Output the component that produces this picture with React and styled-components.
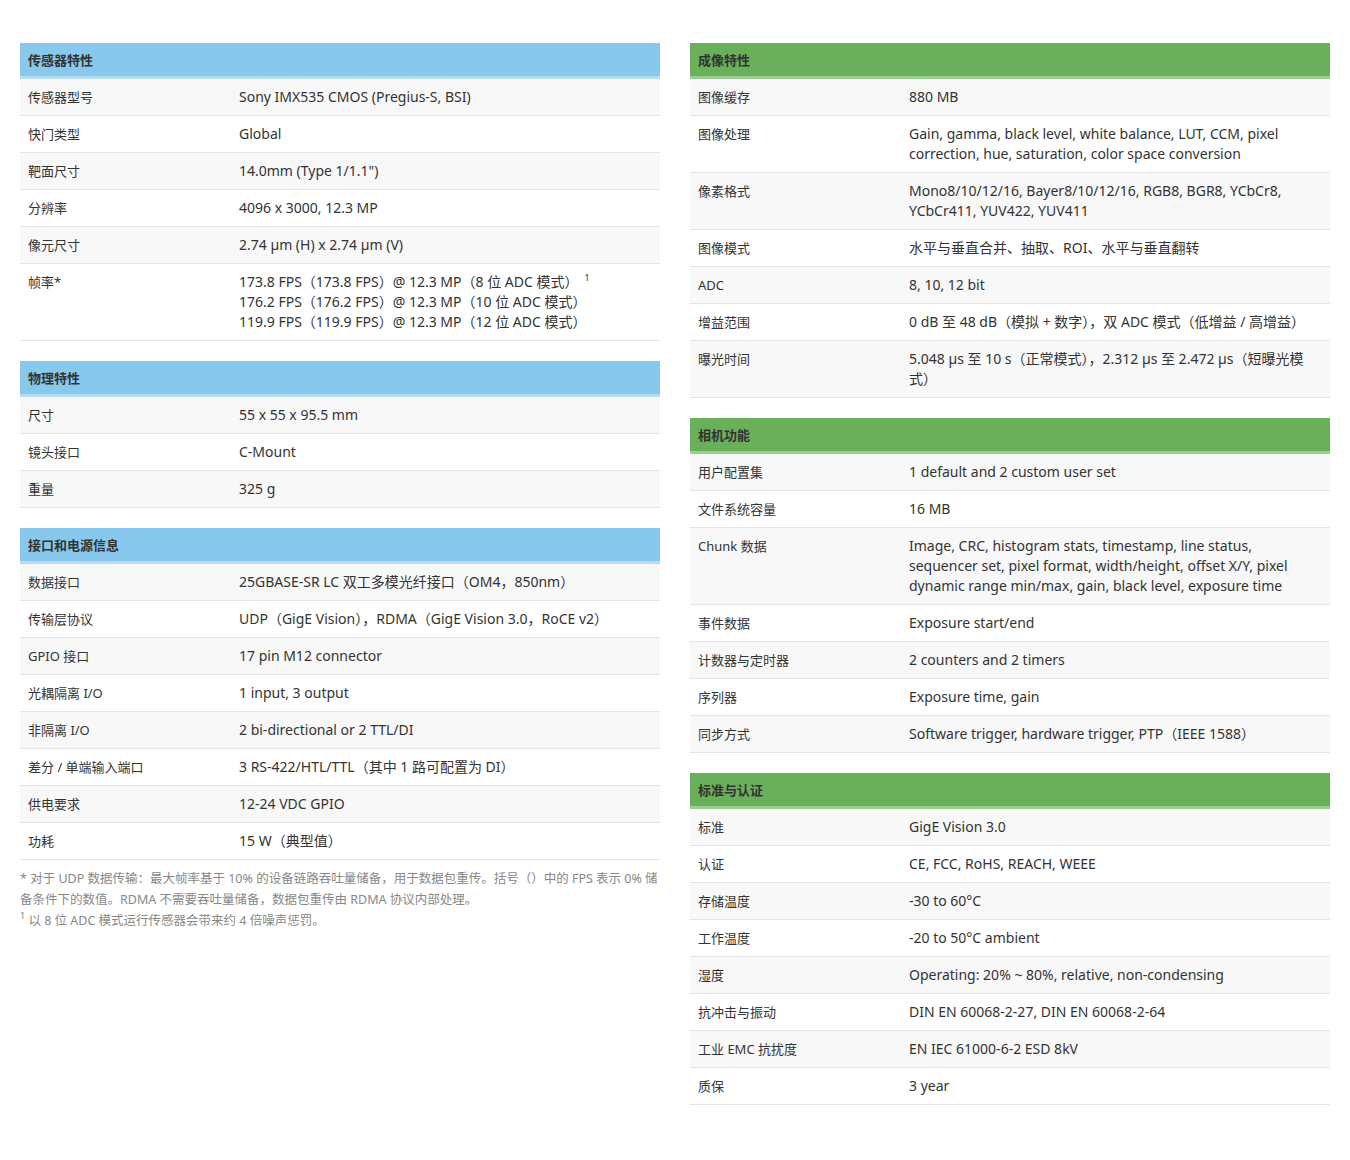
import React from 'react';
import styled, { createGlobalStyle } from 'styled-components';

const Global = createGlobalStyle`
  body {
    margin: 0;
    background: #fff;
    font-family: "Noto Sans", "Noto Sans CJK SC", sans-serif;
    color: #333;
  }
`;

const Page = styled.div`
  display: grid;
  grid-template-columns: 640px 640px;
  gap: 30px;
  padding: 43px 20px 20px;
`;

const Column = styled.div`
  display: flex;
  flex-direction: column;
  gap: 20px;
`;

const Table = styled.div``;

const Head = styled.div`
  background: ${p => (p.$green ? '#6ab05a' : '#88c8ec')};
  border-bottom: 3px solid ${p => (p.$green ? '#9ccd90' : '#b5dcf3')};
  height: 33px;
  display: flex;
  align-items: center;
  padding: 0 8px;
  font-size: 13px;
  font-weight: 700;
  color: #333;
`;

const Row = styled.div`
  display: grid;
  grid-template-columns: 211px 1fr;
  background: ${p => (p.$odd ? '#f8f8f8' : '#fff')};
  border-bottom: 1px solid #e4e4e4;
  font-size: 14px;
  line-height: 20px;
  padding: 8px 0;
`;

const Label = styled.div`
  padding: 0 8px;
  font-size: 13px;
`;

const Value = styled.div`
  padding: 0 8px 0 8px;
`;

const Notes = styled.div`
  font-size: 12.5px;
  line-height: 21px;
  color: #888;
  margin-top: 8px;
`;

const Sup = styled.sup`
  font-size: 9px;
  vertical-align: 6px;
  line-height: 0;
  margin-left: ${p => (p.$left ? '6px' : '0')};
`;

const Spec = ({ title, green, rows }) => (
  <Table>
    <Head $green={green}>{title}</Head>
    {rows.map(([k, v], i) => (
      <Row key={i} $odd={i % 2 === 0}>
        <Label>{k}</Label>
        <Value>{v}</Value>
      </Row>
    ))}
  </Table>
);

const fps = (
  <>
    173.8 FPS（173.8 FPS）@ 12.3 MP（8 位 ADC 模式）<Sup $left>1</Sup>
    <br />176.2 FPS（176.2 FPS）@ 12.3 MP（10 位 ADC 模式）
    <br />119.9 FPS（119.9 FPS）@ 12.3 MP（12 位 ADC 模式）
  </>
);

export default function App() {
  return (
    <>
      <Global />
      <Page>
        <Column>
          <Spec title="传感器特性" rows={[
            ['传感器型号', 'Sony IMX535 CMOS (Pregius-S, BSI)'],
            ['快门类型', 'Global'],
            ['靶面尺寸', '14.0mm (Type 1/1.1")'],
            ['分辨率', '4096 x 3000, 12.3 MP'],
            ['像元尺寸', '2.74 µm (H) x 2.74 µm (V)'],
            ['帧率*', fps],
          ]} />
          <Spec title="物理特性" rows={[
            ['尺寸', '55 x 55 x 95.5 mm'],
            ['镜头接口', 'C-Mount'],
            ['重量', '325 g'],
          ]} />
          <div>
            <Spec title="接口和电源信息" rows={[
              ['数据接口', '25GBASE-SR LC 双工多模光纤接口（OM4，850nm）'],
              ['传输层协议', 'UDP（GigE Vision），RDMA（GigE Vision 3.0，RoCE v2）'],
              ['GPIO 接口', '17 pin M12 connector'],
              ['光耦隔离 I/O', '1 input, 3 output'],
              ['非隔离 I/O', '2 bi-directional or 2 TTL/DI'],
              ['差分 / 单端输入端口', '3 RS-422/HTL/TTL（其中 1 路可配置为 DI）'],
              ['供电要求', '12-24 VDC GPIO'],
              ['功耗', '15 W（典型值）'],
            ]} />
            <Notes>
              * 对于 UDP 数据传输：最大帧率基于 10% 的设备链路吞吐量储备，用于数据包重传。括号（）中的 FPS 表示 0% 储备条件下的数值。RDMA 不需要吞吐量储备，数据包重传由 RDMA 协议内部处理。
              <br /><Sup>1</Sup> 以 8 位 ADC 模式运行传感器会带来约 4 倍噪声惩罚。
            </Notes>
          </div>
        </Column>
        <Column>
          <Spec green title="成像特性" rows={[
            ['图像缓存', '880 MB'],
            ['图像处理', 'Gain, gamma, black level, white balance, LUT, CCM, pixel correction, hue, saturation, color space conversion'],
            ['像素格式', 'Mono8/10/12/16, Bayer8/10/12/16, RGB8, BGR8, YCbCr8, YCbCr411, YUV422, YUV411'],
            ['图像模式', '水平与垂直合并、抽取、ROI、水平与垂直翻转'],
            ['ADC', '8, 10, 12 bit'],
            ['增益范围', '0 dB 至 48 dB（模拟 + 数字），双 ADC 模式（低增益 / 高增益）'],
            ['曝光时间', '5.048 µs 至 10 s（正常模式），2.312 µs 至 2.472 µs（短曝光模式）'],
          ]} />
          <Spec green title="相机功能" rows={[
            ['用户配置集', '1 default and 2 custom user set'],
            ['文件系统容量', '16 MB'],
            ['Chunk 数据', 'Image, CRC, histogram stats, timestamp, line status, sequencer set, pixel format, width/height, offset X/Y, pixel dynamic range min/max, gain, black level, exposure time'],
            ['事件数据', 'Exposure start/end'],
            ['计数器与定时器', '2 counters and 2 timers'],
            ['序列器', 'Exposure time, gain'],
            ['同步方式', 'Software trigger, hardware trigger, PTP（IEEE 1588）'],
          ]} />
          <Spec green title="标准与认证" rows={[
            ['标准', 'GigE Vision 3.0'],
            ['认证', 'CE, FCC, RoHS, REACH, WEEE'],
            ['存储温度', '-30 to 60°C'],
            ['工作温度', '-20 to 50°C ambient'],
            ['湿度', 'Operating: 20% ~ 80%, relative, non-condensing'],
            ['抗冲击与振动', 'DIN EN 60068-2-27, DIN EN 60068-2-64'],
            ['工业 EMC 抗扰度', 'EN IEC 61000-6-2 ESD 8kV'],
            ['质保', '3 year'],
          ]} />
        </Column>
      </Page>
    </>
  );
}
